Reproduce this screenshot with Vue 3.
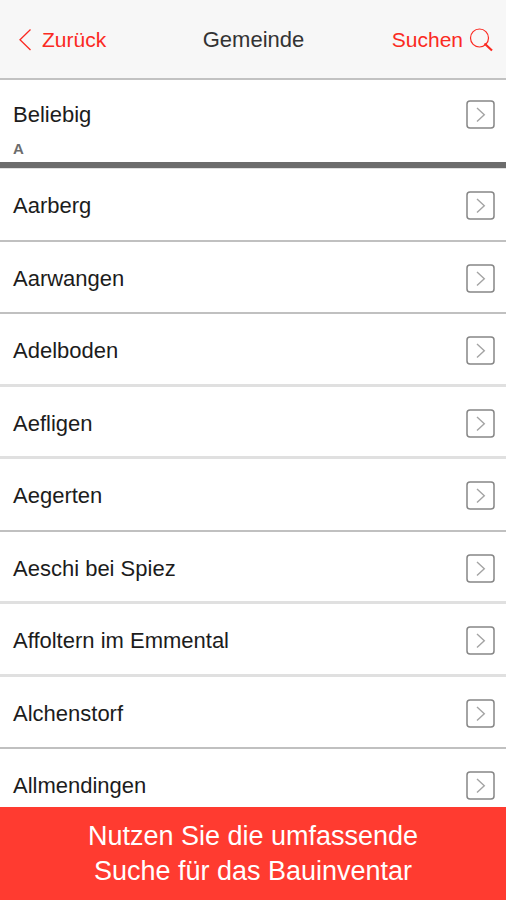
<script setup>
const towns = [
  { name: 'Aarberg' },
  { name: 'Aarwangen' },
  { name: 'Adelboden', soft: true },
  { name: 'Aefligen', soft: true },
  { name: 'Aegerten' },
  { name: 'Aeschi bei Spiez', soft: true },
  { name: 'Affoltern im Emmental', soft: true },
  { name: 'Alchenstorf' },
  { name: 'Allmendingen' },
]
</script>

<template>
  <div class="screen">
    <header class="bar">
      <button class="action back" type="button">
        <svg width="14" height="22" viewBox="0 0 14 22" aria-hidden="true">
          <path d="M12.5 0.5 L2 10.7 L12.5 21" fill="none" stroke="currentColor" stroke-width="1.3" />
        </svg>
        <span>Zurück</span>
      </button>
      <h1 class="title">Gemeinde</h1>
      <button class="action search" type="button">
        <span>Suchen</span>
        <svg width="24" height="24" viewBox="0 0 24 24" aria-hidden="true">
          <circle cx="10.5" cy="10" r="9" fill="none" stroke="currentColor" stroke-width="1.2" />
          <path d="M15.5 15.5 L23 22.5" fill="none" stroke="currentColor" stroke-width="2.2" />
        </svg>
      </button>
    </header>

    <main class="content">
      <a class="row any" href="#any">
        <span>Beliebig</span>
        <svg class="go" width="29" height="29" viewBox="0 0 29 29" aria-hidden="true">
          <rect class="box" x="1" y="1" width="27" height="27" rx="3" />
          <path class="arrow" d="M11 8 L18.3 14.7 L11 21.5" />
        </svg>
      </a>
      <h2 class="letter">A</h2>
      <ul class="list">
        <li v-for="town in towns" :key="town.name" class="item">
          <a class="row" :class="{ soft: town.soft }" :href="'#' + encodeURIComponent(town.name)">
            <span>{{ town.name }}</span>
            <svg class="go" width="29" height="29" viewBox="0 0 29 29" aria-hidden="true">
              <rect class="box" x="1" y="1" width="27" height="27" rx="3" />
              <path class="arrow" d="M11 8 L18.3 14.7 L11 21.5" />
            </svg>
          </a>
        </li>
      </ul>
    </main>

    <footer class="banner">
      Nutzen Sie die umfassende<br />
      Suche für das Bauinventar
    </footer>
  </div>
</template>

<style>
body {
  margin: 0;
}
</style>

<style scoped>
.screen {
  display: flex;
  flex-direction: column;
  min-height: 100vh;
  background: #fff;
  color: #1c1c1c;
  font-family: "Liberation Sans", Arial, sans-serif;
  font-size: 22px;
  line-height: 30px;
}

.bar {
  display: grid;
  grid-template-columns: 1fr auto 1fr;
  align-items: center;
  box-sizing: border-box;
  height: 80px;
  padding: 2px 13px 0 14px;
  background: #f7f7f7;
  border-bottom: 2px solid #c2c2c2;
}

.title {
  margin: 0;
  font-size: 22px;
  font-weight: 400;
  color: #333;
}

.action {
  display: flex;
  align-items: center;
  padding: 0;
  border: 0;
  background: none;
  color: #fb2a22;
  font-family: inherit;
  font-size: 21px;
  line-height: 30px;
  cursor: pointer;
}

.back {
  justify-self: start;
  gap: 10px;
  padding-left: 4px;
}

.search {
  justify-self: end;
  gap: 6px;
}

.content {
  display: flex;
  flex: 1;
  flex-direction: column;
}

.row {
  display: flex;
  flex: 1;
  justify-content: space-between;
  align-items: flex-start;
  padding: 22px 11px 0 13px;
  border-bottom: 2px solid #c0c0c0;
  color: inherit;
  text-decoration: none;
}

.any {
  flex: none;
  padding-top: 20px;
  border-bottom: 0;
}

.soft {
  border-bottom: 3px solid #e0e0e0;
}

.go {
  flex: none;
  fill: none;
}

.box {
  stroke: #868686;
  stroke-width: 1.5;
}

.arrow {
  stroke: #a4a4a4;
  stroke-width: 1.4;
}

.letter {
  margin: 0;
  padding: 9px 13px 3px;
  border-bottom: 6px solid #6c6c6c;
  color: #6c6c6c;
  font-size: 15px;
  font-weight: 700;
  line-height: 20px;
}

.list {
  display: flex;
  flex: 1;
  flex-direction: column;
  margin: 0;
  padding: 0;
  border-top: 1px solid #e0e0e0;
  list-style: none;
}

.item {
  display: flex;
  flex: 5 0 0;
}

.item:last-child {
  flex-grow: 4;
}

.item:last-child .row {
  border-bottom: 0;
}

.banner {
  padding: 12px 16px 11px;
  background: #ff3b30;
  color: #fff;
  font-size: 27px;
  line-height: 35px;
  text-align: center;
}
</style>
